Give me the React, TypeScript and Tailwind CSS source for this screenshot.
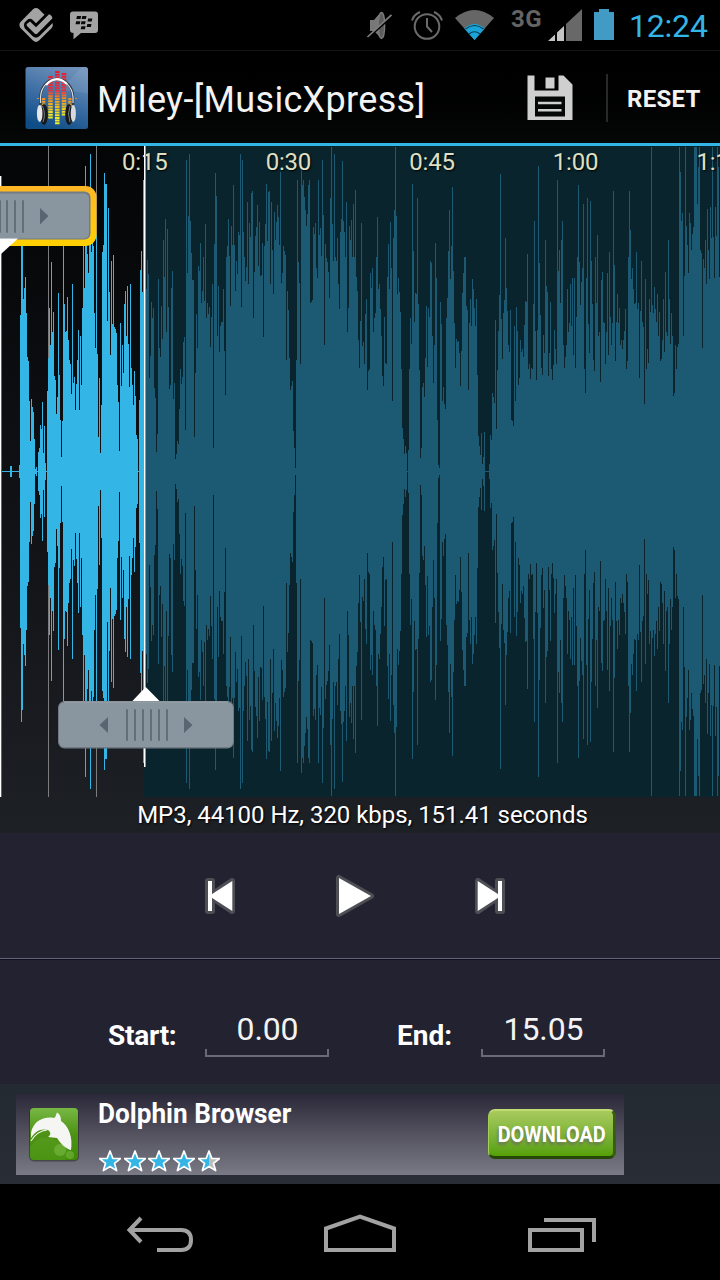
import React from "react";

// Distance from the top of the plot to the peak of each one-pixel column.
const PEAKS: number[] = [
  331,331,331,331,331,331,331,331,331,331,326,326,331,331,331,331,331,331,331,325,
  175,81,93,159,148,137,173,217,221,261,301,259,267,272,299,329,327,331,312,308,
  285,289,262,313,286,323,331,251,218,168,205,122,192,172,236,240,274,257,153,235,
  280,317,281,85,164,192,191,157,200,220,224,254,144,243,237,270,244,220,190,270,
  196,245,168,100,148,26,100,114,133,100,14,112,96,106,173,208,95,214,297,238,
  313,265,112,105,33,44,44,181,68,152,215,121,184,115,187,189,193,245,262,311,
  183,246,205,233,164,151,196,146,204,247,144,228,245,265,231,256,295,299,331,260,
  130,111,152,40,40,215,149,120,134,238,216,162,178,168,248,258,312,294,139,208,
  217,166,199,100,137,79,192,89,167,249,245,148,131,259,243,319,314,301,304,269,
  229,244,237,202,197,290,20,133,76,14,81,113,140,140,297,233,174,208,126,131,
  103,163,151,117,161,84,178,163,174,167,207,177,144,308,104,33,56,196,146,212,
  186,182,182,149,211,255,117,106,79,116,166,86,105,45,105,151,121,134,92,95,
  14,167,20,92,117,141,127,62,144,83,97,53,51,178,132,96,87,65,126,82,
  136,135,103,197,106,84,44,101,52,51,144,62,110,154,72,100,82,65,77,105,
  32,143,133,106,111,115,220,151,170,218,250,246,241,291,308,328,220,40,122,143,
  224,30,45,40,57,70,86,74,45,40,163,162,160,87,94,83,128,138,40,95,
  88,116,20,75,205,104,118,122,132,158,58,7,84,121,14,117,121,98,144,169,
  92,79,21,81,92,117,62,192,168,86,100,80,117,64,117,50,137,151,200,228,
  181,83,206,202,224,174,159,250,231,229,133,148,128,192,178,173,117,77,149,144,
  169,196,236,246,177,223,224,137,104,149,82,128,261,98,70,7,76,154,138,152,
  172,229,288,299,314,306,313,331,310,229,178,204,44,111,182,153,154,58,164,230,
  318,308,247,243,257,218,166,227,168,177,121,123,196,243,205,103,138,280,325,328,
  162,184,261,247,264,269,178,158,111,70,139,106,47,131,183,228,199,202,201,213,
  246,211,153,133,117,117,166,170,250,183,159,186,139,149,168,186,159,235,296,306,
  315,293,324,317,292,331,331,331,331,324,295,300,253,257,263,180,289,230,191,155,
  34,179,219,173,160,98,148,171,205,212,170,280,281,286,186,261,167,191,245,238,
  200,212,209,217,185,161,162,114,229,224,239,228,229,164,81,191,240,190,26,123,
  175,228,235,195,213,100,146,152,236,213,162,229,240,225,190,209,224,40,131,110,
  163,100,81,205,228,217,205,149,192,183,144,186,138,215,138,228,177,117,45,122,
  165,142,128,64,229,253,138,58,184,213,61,121,164,220,231,117,163,95,196,192,
  242,140,132,182,183,224,192,133,215,112,177,205,183,51,125,221,182,154,183,168,
  205,200,209,200,191,169,229,221,117,51,90,139,128,149,164,163,112,169,163,238,
  171,121,182,187,264,139,229,209,223,159,172,7,165,173,147,169,182,154,196,172,
  221,219,200,159,212,132,192,196,100,159,204,173,196,256,253,205,229,207,204,7,
  32,81,73,196,136,7,86,105,133,73,83,110,94,87,7,7,7,64,27,7,
  110,113,208,119,128,100,144,69,110,139,67,98,7,97,138,67,96,7,27,137,
];

const SELECTION_END = 144;

function wavePath(from: number, to: number): string {
  let d = "";
  for (let x = from; x < to; x++) {
    const top = PEAKS[x] - 6;
    d += `M${x} ${top}h1v${651 - 2 * top}h-1z`;
  }
  return d;
}

const TIMES = ["0:15", "0:30", "0:45", "1:00", "1:15"];

function StatusBar() {
  return (
    <div className="flex h-[51px] items-start border-b border-[#141414] bg-black">
      <svg className="ml-[18px] h-[50px] w-9 shrink-0" viewBox="18 0 36 50">
        <path d="M33 9.2Q36 6.6 39 9.2L44.5 14.7L36 23.2L32.5 19.7Q30 18 27.4 19.8L24.5 22.8Q22.8 25.5 24.7 28.3L33 36.5Q36 38.8 39 36.5L52.6 23Q53.5 26 51.5 28.3L39 40.6Q36 43.2 33 40.6L20.5 28Q18.3 25 20.5 22Z" fill="#a3a3a3" />
        <path d="M27 23.8L30 21.4L36 27.3L49 14.2Q52.5 15.4 52.3 18.5L37.4 33.4Q36 34.6 34.6 33.4L27 26Q26 24.9 27 23.8Z" fill="#a3a3a3" />
      </svg>
      <svg className="ml-[15px] h-[50px] w-[30px] shrink-0" viewBox="69 0 30 50">
        <path d="M73 11.5H95Q98 11.5 98 14.5V30Q98 33 95 33H81L73.5 39.3V33Q70 33 70 30V14.5Q70 11.5 73 11.5Z" fill="#a3a3a3" />
        <g fill="#080808">
          <path d="M77 16h4.2l-.7 3h-4.2zM82.3 16h4.2l-.7 3h-4.2zM76.2 21.3h4.2l-.7 3h-4.2zM81.5 21.3h4.2l-.7 3h-4.2zM88.2 18.6h4.2l-.7 3h-4.2zM87.3 23.9h4.2l-.7 3h-4.2zM81.4 26.2h4.2l-.7 3h-4.2z" />
        </g>
      </svg>
      <svg className="ml-[267px] h-[50px] w-[130px] shrink-0" viewBox="366 0 130 50">
        <path d="M370 20h4l6-7Q383 25 380 37l-6-6h-4z" fill="#787878" />
        <ellipse cx="381.5" cy="25.5" rx="3.2" ry="13" fill="#5c5c5c" stroke="#7a7a7a" strokeWidth="1.3" />
        <path d="M366.5 39L391 17.2" stroke="#000" strokeWidth="2.2" />
        <path d="M367.5 37L391.5 14.8" stroke="#808080" strokeWidth="1.7" />
        <g fill="none" stroke="#6b6b6b" strokeWidth="2">
          <circle cx="427" cy="26.5" r="12.3" />
          <path d="M427 18v8.5l5 5.5M412 20.5q1.5-5.5 8-8.5M442 20.5q-1.5-5.5-8-8.5" />
        </g>
        <path d="M455 18Q474.5 2 494 18L474.5 40Z" fill="#666" />
        <path d="M464.3 28.5Q474.5 19.5 484.7 28.5L474.5 40Z" fill="#1ba4d8" />
        <path d="M465.5 29Q474.5 22 483.5 29M469 34Q474.5 29.5 480 34" fill="none" stroke="#073f55" strokeWidth="1.1" />
      </svg>
      <span className="ml-[15px] mt-[5px] w-9 shrink-0 text-[24px] font-bold leading-[28px] tracking-[0.4px] text-[#646464]">3G</span>
      <svg className="h-[50px] w-[70px] shrink-0" viewBox="547 0 70 50">
        <path d="M548 41L555 34.5V41ZM557 41V32.5L564 26V41Z" fill="#c4c4c4" />
        <path d="M566 24L582 9V41H566Z" fill="#686868" />
        <path d="M594 12h5V9h10v3h5v28h-20z" fill="#429bc4" />
      </svg>
      <span className="ml-[12px] mt-[7px] text-[32px] leading-[38px] tracking-[-0.2px] text-[#33b5e5]">12:24</span>
    </div>
  );
}

function AppIcon() {
  const bars: [number, number, number][] = [
    [41, 98, 107], [48.5, 76, 119], [55.3, 71, 125], [62, 73, 116], [68.5, 98, 107],
  ];
  return (
    <svg className="ml-[25px] size-[64px] shrink-0" viewBox="25 66 64 64">
      <defs>
        <linearGradient id="tile" x1="0.7" y1="0" x2="0.35" y2="1">
          <stop offset="0" stopColor="#6f91b9" />
          <stop offset="0.5" stopColor="#3e6fa5" />
          <stop offset="1" stopColor="#0f4d86" />
        </linearGradient>
        <linearGradient id="level" gradientUnits="userSpaceOnUse" x1="0" y1="71" x2="0" y2="125">
          <stop offset="0" stopColor="#e81c2c" />
          <stop offset="0.36" stopColor="#e9303a" />
          <stop offset="0.5" stopColor="#ee8d22" />
          <stop offset="0.8" stopColor="#f3e51d" />
          <stop offset="1" stopColor="#f5f02a" />
        </linearGradient>
      </defs>
      <rect x="25.5" y="67" width="62.5" height="62" rx="2.5" fill="url(#tile)" />
      <path d="M82 67h3.5q2.5 0 2.5 2.5v24L60 90z" fill="#fff" opacity="0.08" />
      {bars.map(([x, top, bottom]) => (
        <path key={x} d={`M${x + 2} ${top}V${bottom}`} stroke="url(#level)" strokeWidth="4.5" strokeDasharray="2 0.7" />
      ))}
      <path d="M37 98.5h5M72 98.5h6" stroke="#d88b35" strokeWidth="1" strokeDasharray="2 1" />
      <path d="M40.5 105V98C40.5 73 73 73 73 98V105" fill="none" stroke="#333b43" strokeWidth="2.6" />
      <path d="M40.5 103V97C42 74 71 74 73 97V103" fill="none" stroke="#d7dfe6" strokeWidth="1.2" />
      <path d="M46 85Q56 74 67 84" fill="none" stroke="#fff" strokeWidth="2.2" />
      <ellipse cx="44" cy="114.5" rx="3.8" ry="10.5" fill="#17191c" />
      <ellipse cx="69" cy="114.5" rx="3.8" ry="10.5" fill="#17191c" />
      <ellipse cx="39.7" cy="113.5" rx="2.8" ry="8.5" fill="#e5e7e9" />
      <ellipse cx="73.3" cy="113.5" rx="2.6" ry="8.5" fill="#d7dadd" />
      <path d="M42.5 106Q46 114 43 122M70 106Q67 114 70 122" fill="none" stroke="#777d83" strokeWidth="1" />
    </svg>
  );
}

function ActionBar() {
  return (
    <header className="flex h-[95px] items-center border-b-[3px] border-[#33b5e5] bg-gradient-to-b from-black to-[#060808] pt-[2px]">
      <AppIcon />
      <h1 className="ml-[8px] mt-[4px] w-[429px] shrink-0 whitespace-nowrap text-[36px] font-normal leading-[42px] tracking-[0.32px] text-[#f3f3f3]">Miley-[MusicXpress]</h1>
      <svg className="h-[48px] w-[48px] shrink-0" viewBox="526 74 48 48">
        <path d="M527.5 75.5h7v15h24v-15h5l9 9v35.5h-45z" fill="#cfcfcf" />
        <path d="M545.5 77.5h9v11h-9z" fill="#cfcfcf" />
        <path d="M535 96.5h30v20h-30z" fill="#050606" />
        <path d="M538 103h23.5M538 110.3h23.5" stroke="#cfcfcf" strokeWidth="2.4" />
      </svg>
      <div className="ml-[32px] h-12 w-[2px] shrink-0 bg-[#282a2a]" />
      <button className="ml-[19px] mt-[1px] text-[24px] font-bold leading-7 tracking-[0.25px] text-[#f3f3f3]">RESET</button>
    </header>
  );
}

function Waveform() {
  return (
    <section className="relative h-[651px] overflow-hidden">
      <svg className="absolute inset-0 h-[651px] w-[720px]" viewBox="0 0 720 651" shapeRendering="crispEdges">
        <path d="M144 0h576v651H144z" fill="#0a242d" />
        <path d="M48 0h1v651h-1zM96 0h1v651h-1z" fill="#7c7c7c" />
        <path d={wavePath(2, SELECTION_END)} fill="#33b5e5" />
        <path d={wavePath(SELECTION_END, 720)} fill="#1b5a72" />
        <path d="M0 30h1v621H0z" fill="#fff" />
        <path d="M1 30h1v621H1z" fill="#62666a" />
      </svg>
      <div className="relative ml-[73px] flex text-center text-[24px] leading-7 tracking-[-0.2px] text-[#dfe0c3] [text-shadow:1px_1px_2px_#000]">
        {TIMES.map((time) => (
          <span key={time} className="mt-[2px] w-[143.6px] shrink-0">{time}</span>
        ))}
      </div>
      <svg className="absolute inset-0 h-[651px] w-[720px]" viewBox="0 146 720 651">
        <defs>
          <linearGradient id="focus" x1="0" y1="0" x2="0" y2="1">
            <stop offset="0" stopColor="#ffb726" />
            <stop offset="1" stopColor="#ffd000" />
          </linearGradient>
        </defs>
        <path d="M144 146h1v621h-1z" fill="#fff" />
        <path d="M145 146h1v621h-1z" fill="#8b989c" />
        <rect x="-84" y="186" width="180.5" height="60" rx="11" fill="url(#focus)" />
        <rect x="-78" y="191.5" width="168.5" height="48" rx="6" fill="#727b82" />
        <rect x="-77" y="193.5" width="166" height="45" rx="5" fill="#8a969f" />
        <path d="M-17 238.5H18L1 254Z" fill="#fff" />
        <path d="M0 201v31M7 201v31M15 201v31M23 201v31" stroke="#626e78" strokeWidth="2" strokeLinecap="round" />
        <path d="M40 208L48.5 216L40 224.5Z" fill="#596570" />
        <path d="M131 702.5L145.7 687L161 702.5Z" fill="#fff" />
        <rect x="58" y="701" width="176" height="47.5" rx="6.5" fill="#717a82" />
        <rect x="59" y="702.5" width="174" height="44.5" rx="5.5" fill="#8a969f" />
        <path d="M64 702h164" stroke="#a7afb5" />
        <path d="M127 710v30M135 710v30M143 710v30M151 710v30M159 710v30M167 710v30" stroke="#626e78" strokeWidth="2" strokeLinecap="round" />
        <path d="M108 717V733L99.5 725ZM184 717V733L192.5 725Z" fill="#596570" />
      </svg>
    </section>
  );
}

function SkipIcon({ flipped = false }: { flipped?: boolean }) {
  return (
    <svg className={flipped ? "size-9 -scale-x-100" : "size-9"} viewBox="202 878 36 36">
      <g fill="#4e4e55" stroke="#4e4e55" strokeWidth="6" strokeLinejoin="round">
        <path d="M208 881h4v30h-4z" />
        <path d="M232 881v30l-22-15z" />
      </g>
      <path d="M208 881h4v30h-4z" fill="#fff" />
      <path d="M232.3 881v30L209 896z" fill="#fff" />
    </svg>
  );
}

function Transport() {
  return (
    <div className="flex h-[125px] items-center bg-[#232231]">
      <button className="ml-[202px]">
        <SkipIcon />
      </button>
      <button className="ml-[97px]">
        <svg className="h-[44px] w-10" viewBox="335 874 40 44">
          <path d="M339 878v36l32-18z" fill="#4e4e55" stroke="#4e4e55" strokeWidth="6" strokeLinejoin="round" />
          <path d="M339 878v36l32-18z" fill="#fff" />
        </svg>
      </button>
      <button className="ml-[97px]">
        <SkipIcon flipped />
      </button>
    </div>
  );
}

function Field({ value }: { value: string }) {
  return (
    <div className="flex h-[47px] w-[124px] shrink-0 flex-col">
      <div className="h-[39px] pl-[1px] text-center text-[32px] leading-[38px] tracking-[-0.1px] text-[#f3f3f3]">{value}</div>
      <div className="h-2 border-x-2 border-b-2 border-[#6a6975]" />
    </div>
  );
}

function Range() {
  return (
    <div className="flex h-[124px] items-start bg-[#232231] pt-[50px]">
      <span className="ml-[108px] mt-[10px] w-[97px] text-[28px] font-bold leading-8 tracking-[-0.25px] text-white">Start:</span>
      <Field value="0.00" />
      <span className="ml-[68px] mt-[10px] w-[84px] text-[28px] font-bold leading-8 text-white">End:</span>
      <Field value="15.05" />
    </div>
  );
}

function Stars() {
  const star = "M11 1L13.8 8.3L21.5 8.5L15.5 13.3L17.6 20.6L11 16.5L4.4 20.6L6.5 13.3L.5 8.5L8.2 8.3Z";
  return (
    <div className="flex gap-[2.7px] pl-[1px]">
      {[0, 1, 2, 3, 4].map((i) => (
        <svg key={i} className="size-[22px]" viewBox="0 0 22 22">
          <path d={star} fill={i === 4 ? "#bdbdbd" : "#33b5e5"} />
          {i === 4 && <path d="M11 1V16.5L4.4 20.6L6.5 13.3L.5 8.5L8.2 8.3Z" fill="#33b5e5" />}
          <path d={star} fill="none" stroke="#fff" strokeWidth="1.7" strokeLinejoin="round" />
        </svg>
      ))}
    </div>
  );
}

function Advert() {
  return (
    <div className="h-[100px] bg-gradient-to-b from-[#242a31] to-[#292d36] pl-4 pt-[10px]">
      <div className="flex h-[81px] w-[608px] items-start bg-gradient-to-b from-[#2b2939] via-[#555360] to-[#797a86]">
        <svg className="ml-3 mt-3 h-[56px] w-[52px] shrink-0" viewBox="28 1106 52 56">
          <defs>
            <linearGradient id="leaf" x1="0" y1="0" x2="0" y2="1">
              <stop offset="0" stopColor="#77b843" />
              <stop offset="0.5" stopColor="#4e9215" />
              <stop offset="1" stopColor="#3f8a06" />
            </linearGradient>
          </defs>
          <rect x="29" y="1109" width="50" height="52.5" rx="5" fill="#1d2422" opacity="0.5" />
          <rect x="30" y="1108" width="48" height="52" rx="4" fill="url(#leaf)" />
          <circle cx="60" cy="1150" r="6" fill="#7fc04b" opacity="0.6" />
          <circle cx="70" cy="1155" r="4" fill="#7fc04b" opacity="0.5" />
          <path d="M30 1147Q38 1135 50 1138L61 1142L70 1152L65 1160H34Q30 1160 30 1156Z" fill="#68ac30" opacity="0.3" />
          <path d="M31 1133C33 1121 44 1116 54 1118C56 1117 56 1114 57 1112.5C60 1114 61 1117 61 1121C69 1126 73 1138 71 1150C66 1149 61 1144 57 1138L48 1137C51 1135 51 1132 48 1130C41 1128 35 1131 31 1138Z" fill="#f5f5f3" />
          <path d="M31 1141Q37 1131 47 1130" fill="none" stroke="#f5f5f3" strokeWidth="1.2" />
        </svg>
        <div className="ml-[18px] w-[390px] shrink-0">
          <div className="mt-[4px] origin-left text-[28px] font-bold leading-8 text-white [transform:scaleX(0.935)]">Dolphin Browser</div>
          <div className="mt-[20px]"><Stars /></div>
        </div>
        <button className="mt-[15px] flex h-[50px] w-[128px] shrink-0 items-center justify-center rounded-[7px] border-b-[3px] border-l border-r-[3px] border-t-2 border-b-[#264806] border-l-[#a3d052] border-r-[#3a5c14] border-t-[#bedc72] bg-gradient-to-b from-[#a8ca5c] to-[#55a004]">
          <span className="ml-[1px] mt-[2px] text-[22px] font-bold leading-6 text-white [text-shadow:-1px_3px_3px_#6b7a52] [transform:scaleX(0.905)]">DOWNLOAD</span>
        </button>
      </div>
    </div>
  );
}

function NavBar() {
  return (
    <nav className="flex h-24 bg-black">
      <svg className="ml-[124px] h-24 w-[72px] shrink-0" viewBox="124 1184 72 96">
        <path d="M157 1250H181Q191 1250 191 1240T181 1230H130M141 1218L129.5 1230L141 1242" fill="none" stroke="#a2a2a2" strokeWidth="4" />
      </svg>
      <svg className="ml-[126px] h-24 w-[76px] shrink-0" viewBox="322 1184 76 96">
        <path d="M326 1250V1228.5L360 1216.5L394 1228.5V1250Z" fill="none" stroke="#a2a2a2" strokeWidth="4" />
      </svg>
      <svg className="ml-[128px] h-24 w-[72px] shrink-0" viewBox="526 1184 72 96">
        <path d="M530 1230H582V1250H530ZM544 1220H594V1242" fill="none" stroke="#a2a2a2" strokeWidth="4" />
      </svg>
    </nav>
  );
}

export default function App() {
  return (
    <div className="flex h-[1280px] w-[720px] flex-col overflow-hidden bg-black font-['Roboto',sans-serif]">
      <StatusBar />
      <ActionBar />
      <div className="bg-gradient-to-b from-[#040506] to-[#1d2025]">
        <Waveform />
        <p className="h-9 pl-[5px] pt-[4px] text-center text-[24px] leading-7 tracking-[-0.04px] text-white [text-shadow:1px_1px_2px_#000]">MP3, 44100 Hz, 320 kbps, 151.41 seconds</p>
      </div>
      <Transport />
      <div className="h-[2px] border-b border-t border-b-[#0e0c20] border-t-[#656372] bg-[#232231]" />
      <Range />
      <Advert />
      <NavBar />
    </div>
  );
}
